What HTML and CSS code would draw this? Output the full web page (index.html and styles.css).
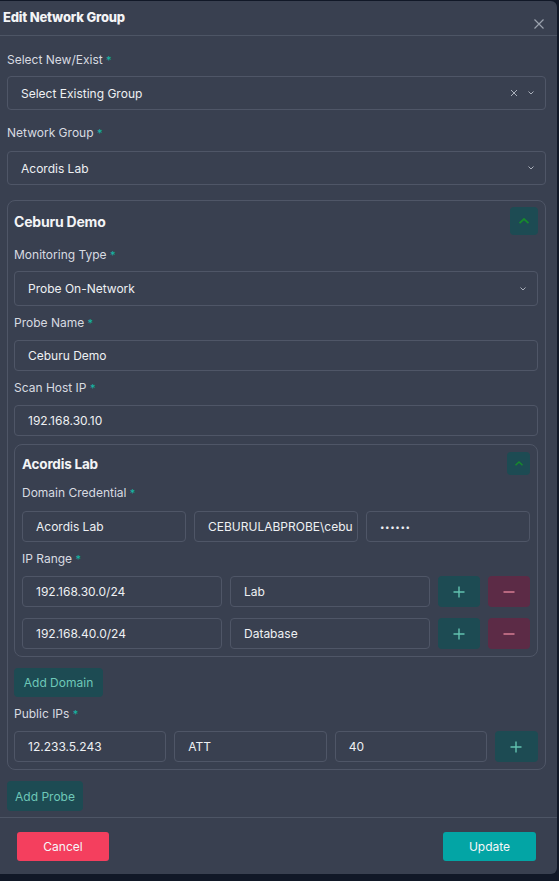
FILE: index.html
```html
<!DOCTYPE html>
<html>
<head>
<meta charset="utf-8">
<link rel="stylesheet" href="styles.css">
</head>
<body>
<div class="modal">
  <div class="modal-header">
    <div class="title">Edit Network Group</div>
    <svg class="close" width="12" height="12" viewBox="0 0 12 12"><path d="M1.5 1.5L10.5 10.5M10.5 1.5L1.5 10.5" stroke="#9aa1ad" stroke-width="1.2" fill="none"/></svg>
  </div>
  <div class="modal-body">
    <div class="field">
      <div class="label">Select New/Exist <span class="req">*</span></div>
      <div class="input select h34">
        <span>Select Existing Group</span>
        <span class="sel-icons">
          <svg width="8" height="8" viewBox="0 0 8 8"><path d="M1 1L7 7M7 1L1 7" stroke="#aab0bb" stroke-width="1" fill="none"/></svg>
          <svg width="8" height="6" viewBox="0 0 8 6"><path d="M1.5 1.5L4 4L6.5 1.5" stroke="#aab0bb" stroke-width="1" fill="none"/></svg>
        </span>
      </div>
    </div>
    <div class="field">
      <div class="label lb10">Network Group <span class="req">*</span></div>
      <div class="input select h34">
        <span>Acordis Lab</span>
        <span class="sel-icons">
          <svg width="8" height="6" viewBox="0 0 8 6"><path d="M1.5 1.5L4 4L6.5 1.5" stroke="#aab0bb" stroke-width="1" fill="none"/></svg>
        </span>
      </div>
    </div>

    <div class="card probe">
      <div class="card-head">
        <div class="card-title">Ceburu Demo</div>
        <div class="collapse big">
          <svg width="12" height="8" viewBox="0 0 12 8"><path d="M1.5 6.2L6 2L10.5 6.2" stroke="#178a2c" stroke-width="1.8" fill="none"/></svg>
        </div>
      </div>
      <div class="field f12">
        <div class="label lb8">Monitoring Type <span class="req">*</span></div>
        <div class="input select h35">
          <span>Probe On-Network</span>
          <span class="sel-icons">
            <svg width="8" height="6" viewBox="0 0 8 6"><path d="M1.5 1.5L4 4L6.5 1.5" stroke="#aab0bb" stroke-width="1" fill="none"/></svg>
          </span>
        </div>
      </div>
      <div class="field f9">
        <div class="label">Probe Name <span class="req">*</span></div>
        <div class="input">Ceburu Demo</div>
      </div>
      <div class="field f9">
        <div class="label">Scan Host IP <span class="req">*</span></div>
        <div class="input">192.168.30.10</div>
      </div>

      <div class="card domain">
        <div class="card-head small">
          <div class="card-title">Acordis Lab</div>
          <div class="collapse">
            <svg width="10" height="7" viewBox="0 0 10 7"><path d="M1.5 5.2L5 2L8.5 5.2" stroke="#178a2c" stroke-width="1.5" fill="none"/></svg>
          </div>
        </div>
        <div class="field f10">
          <div class="label lb10">Domain Credential <span class="req">*</span></div>
          <div class="row3">
            <div class="input">Acordis Lab</div>
            <div class="input">CEBURULABPROBE\cebu</div>
            <div class="input dots">••••••</div>
          </div>
        </div>
        <div class="field f9">
          <div class="label">IP Range <span class="req">*</span></div>
          <div class="iprow">
            <div class="input">192.168.30.0/24</div>
            <div class="input">Lab</div>
            <div class="btn-icon add"><svg width="12" height="12" viewBox="0 0 12 12"><path d="M6 0.5V11.5M0.5 6H11.5" stroke="#62c2b0" stroke-width="1.4" fill="none"/></svg></div>
            <div class="btn-icon del"><svg width="12" height="12" viewBox="0 0 12 12"><path d="M0.5 6H11.5" stroke="#df8298" stroke-width="1.4" fill="none"/></svg></div>
          </div>
          <div class="iprow second">
            <div class="input">192.168.40.0/24</div>
            <div class="input">Database</div>
            <div class="btn-icon add"><svg width="12" height="12" viewBox="0 0 12 12"><path d="M6 0.5V11.5M0.5 6H11.5" stroke="#62c2b0" stroke-width="1.4" fill="none"/></svg></div>
            <div class="btn-icon del"><svg width="12" height="12" viewBox="0 0 12 12"><path d="M0.5 6H11.5" stroke="#df8298" stroke-width="1.4" fill="none"/></svg></div>
          </div>
        </div>
      </div>

      <div class="btn-teal add-domain">Add Domain</div>
      <div class="field f9">
        <div class="label">Public IPs <span class="req">*</span></div>
        <div class="pubrow">
          <div class="input">12.233.5.243</div>
          <div class="input">ATT</div>
          <div class="input">40</div>
          <div class="btn-icon add"><svg width="12" height="12" viewBox="0 0 12 12"><path d="M6 0.5V11.5M0.5 6H11.5" stroke="#62c2b0" stroke-width="1.4" fill="none"/></svg></div>
        </div>
      </div>
    </div>

    <div class="btn-teal add-probe">Add Probe</div>
  </div>
  <div class="modal-footer">
    <div class="btn cancel">Cancel</div>
    <div class="btn update">Update</div>
  </div>
</div>
</body>
</html>
```

FILE: styles.css
```css
* { box-sizing: border-box; }
html, body { margin: 0; padding: 0; }
body {
  background: #111827;
  width: 559px;
  height: 881px;
  overflow: hidden;
  font-family: "Inter", "Open Sans", sans-serif;
  font-size: 12px;
  color: #e8eaee;
}
.modal {
  margin-top: 1px;
  width: 557px;
  height: 873px;
  background: #394050;
  border-radius: 0 6px 6px 0;
  display: flex;
  flex-direction: column;
}
.modal-header {
  height: 35px;
  border-bottom: 1px solid #4d5565;
  display: flex;
  align-items: flex-start;
  justify-content: space-between;
  padding: 8px 12px 0 3px;
}
.title {
  font-size: 13px;
  font-weight: 800;
  color: #f3f4f6;
  letter-spacing: -0.2px;
  line-height: 16px;
}
.close { margin-top: 9px; }
.modal-body {
  flex: 1;
  padding: 16px 11px 0 7px;
  display: flex;
  flex-direction: column;
}
.field { display: flex; flex-direction: column; margin-bottom: 15px; }
.label {
  line-height: 16px;
  height: 16px;
  color: #d8dbe1;
  font-size: 12px;
  margin-bottom: 9px;
}
.lb8 { margin-bottom: 8px; }
.lb10 { margin-bottom: 10px; }
.modal-body > .field:first-child .label { margin-bottom: 8px; }
.req { color: #14b8a6; font-size: 11px; }
.input {
  height: 31px;
  border: 1px solid #4f5667;
  border-radius: 4px;
  padding: 0 13px;
  display: flex;
  align-items: center;
  color: #eef0f3;
  font-size: 12px;
  white-space: nowrap;
  overflow: hidden;
  min-width: 0;
}
.h34 { height: 34px; }
.h35 { height: 35px; }
.select { justify-content: space-between; padding-right: 10px; }
.sel-icons { display: flex; align-items: center; gap: 9px; }
.card {
  border: 1px solid #4f5667;
  border-radius: 8px;
  padding: 6px 7px 7px 6px;
}
.card-head {
  display: flex;
  justify-content: space-between;
  align-items: center;
  height: 28px;
}
.card-head.small { height: 23px; }
.card-title { font-size: 14px; font-weight: 700; color: #f3f4f6; letter-spacing: -0.2px; }
.card-head.small .card-title { font-size: 13.5px; }
.collapse {
  width: 23px; height: 23px;
  background: #1d4b53;
  border-radius: 4px;
  display: flex; align-items: center; justify-content: center;
}
.collapse.big { width: 28px; height: 28px; }
.probe > .field { margin-bottom: 0; }
.f12 { margin-top: 12px; }
.f10 { margin-top: 10px; }
.f9 { margin-top: 9px; }
.domain { margin-top: 8px; padding: 7px 7px 7px 7px; }
.domain .field { margin-bottom: 0; }
.row3 { display: grid; grid-template-columns: 1fr 1fr 1fr; gap: 8px; }
.dots { letter-spacing: 0.6px; font-size: 8px; }
.iprow { display: grid; grid-template-columns: 200px 200px 42px 42px; gap: 8px; height: 31px; }
.iprow.second { margin-top: 11px; }
.btn-icon {
  height: 31px;
  border-radius: 4px;
  display: flex; align-items: center; justify-content: center;
}
.btn-icon.add { background: #1d4b53; }
.btn-icon.del { background: #5c2b46; }
.btn-teal {
  background: #1d4b53;
  color: #6ec8b8;
  border-radius: 4px;
  display: flex; align-items: center; justify-content: center;
  font-size: 12px;
  align-self: flex-start;
}
.add-domain { margin-top: 11px; height: 29px; width: 89px; }
.pubrow { display: grid; grid-template-columns: 1fr 1fr 1fr 43px; gap: 8px; }
.add-probe { margin-top: 11px; height: 30px; width: 76px; }
.modal-footer {
  border-top: 1px solid #4d5565;
  height: 57px;
  padding: 14px 21px 0 17px;
  display: flex;
  justify-content: space-between;
  align-items: flex-start;
}
.btn {
  height: 29px;
  border-radius: 3px;
  display: flex; align-items: center; justify-content: center;
  font-size: 12px;
  color: #f6f7f9;
}
.cancel { width: 92px; background: #f43f5e; }
.update { width: 93px; background: #03a5a5; }
```
